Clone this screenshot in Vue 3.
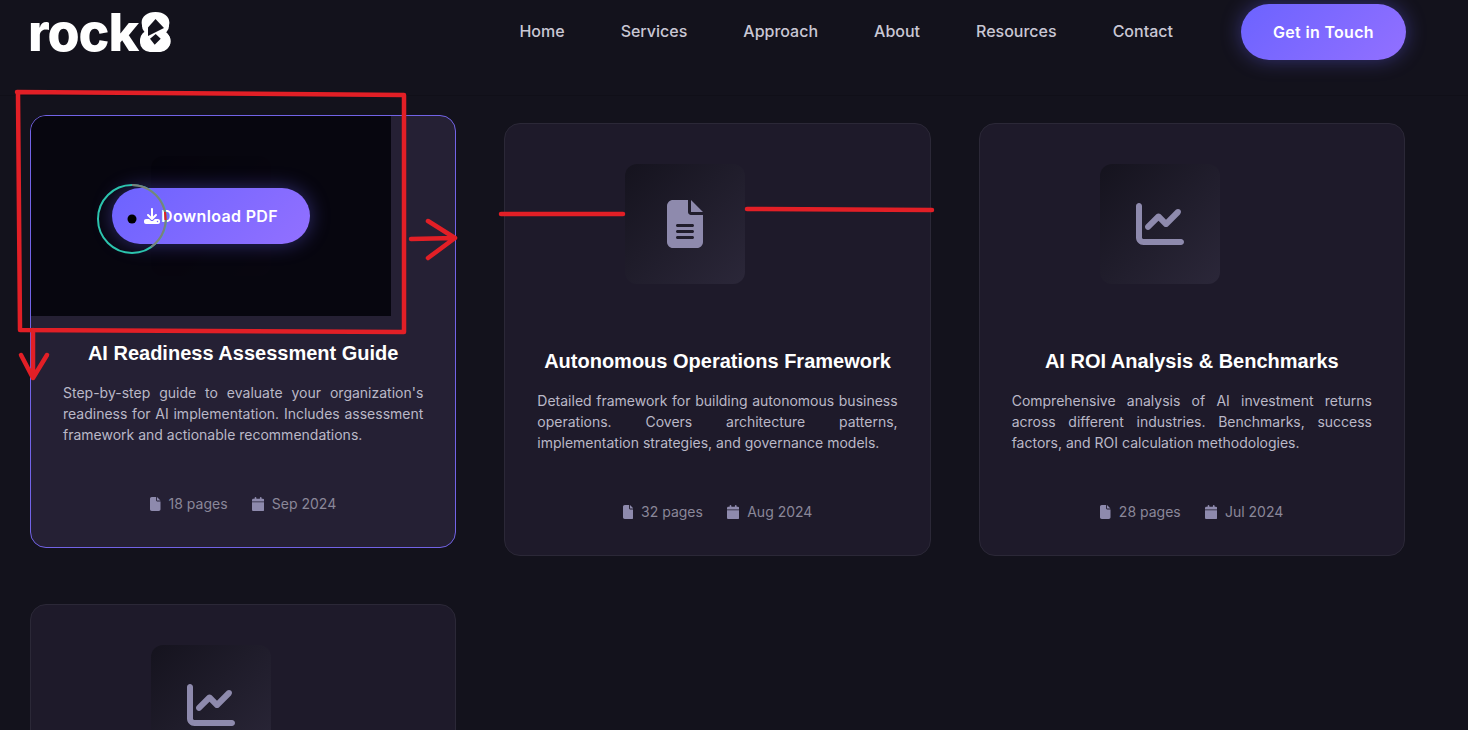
<template>
  <div class="page">
    <header class="topbar">
      <a class="logo">rock<span class="logoEight">8<svg viewBox="0 0 32 40" class="logoCut">
        <rect x="3" y="1" width="27" height="21" rx="9" fill="#fff" />
        <rect x="1" y="17" width="30" height="22" rx="10" fill="#fff" />
        <path d="M16.500 6 L25 15 L9 23 L9 14.500 Z" fill="#14131d" />
        <path d="M16.700 21 L21.700 25.700 L15.700 31.700 L11 25.700 Z" fill="#14131d" />
      </svg></span></a>
      <nav class="menu">
        <a v-for="item in menu" :key="item">{{ item }}</a>
      </nav>
      <button class="pill touch">Get in Touch</button>
    </header>

    <main class="grid">
      <article v-for="card in cards" :key="card.title" class="card" :class="{ hovered: card.hovered }">
        <div class="thumb">
          <div class="iconBox">
            <svg v-if="card.icon === 'file'" class="bigIcon" viewBox="0 0 384 512"><path :d="fileLines" /></svg>
            <svg v-else class="bigIcon" viewBox="0 0 512 512"><path :d="chartLine" /></svg>
          </div>
          <div v-if="card.hovered" class="overlay">
            <button class="pill download">
              <svg class="dlIcon" viewBox="0 0 512 512"><path :d="downloadIcon" /></svg>Download PDF
            </button>
          </div>
        </div>
        <div v-if="card.desc" class="body">
          <h3>{{ card.title }}</h3>
          <p class="desc">{{ card.desc }}</p>
          <div class="meta">
            <span><svg viewBox="0 0 384 512"><path :d="fileSolid" /></svg>{{ card.pages }} pages</span>
            <span><svg viewBox="0 0 448 512"><path :d="calendar" /></svg>{{ card.date }}</span>
          </div>
        </div>
      </article>
    </main>

    <!-- marks drawn over the screenshot by hand -->
    <svg class="marks" viewBox="0 0 1468 730">
      <g fill="none" stroke="#e21f26" stroke-width="4.500" stroke-linecap="round" stroke-linejoin="round">
        <path d="M17 92 L404 95 L404 332 L20 330 L18 94" />
        <path d="M411 239 L455 238 M428 221 L455 238 L428 258" />
        <path d="M33 330 L33 378 M21 355 L33 378 L47 355" />
        <path d="M501 214 L623 214" />
        <path d="M747 209 L932 210" />
      </g>
      <circle cx="132" cy="219" r="34" fill="none" stroke="#2cc4ae" stroke-width="2" />
      <path d="M132 185 A34 34 0 0 1 151 247" fill="none" stroke="#7d7f7a" stroke-width="2" />
      <path d="M165 212 L165.600 220" fill="none" stroke="#e21f26" stroke-width="2" />
      <circle cx="132" cy="219" r="4.500" fill="#000" />
    </svg>
  </div>
</template>

<script setup>
const menu = ["Home", "Services", "Approach", "About", "Resources", "Contact"];

const cards = [
  {
    title: "AI Readiness Assessment Guide",
    desc: "Step-by-step guide to evaluate your organization's readiness for AI implementation. Includes assessment framework and actionable recommendations.",
    pages: 18,
    date: "Sep 2024",
    icon: "file",
    hovered: true,
  },
  {
    title: "Autonomous Operations Framework",
    desc: "Detailed framework for building autonomous business operations. Covers architecture patterns, implementation strategies, and governance models.",
    pages: 32,
    date: "Aug 2024",
    icon: "file",
  },
  {
    title: "AI ROI Analysis & Benchmarks",
    desc: "Comprehensive analysis of AI investment returns across different industries. Benchmarks, success factors, and ROI calculation methodologies.",
    pages: 28,
    date: "Jul 2024",
    icon: "chart",
  },
  { title: "fourth", icon: "chart" },
];

const fileLines = "M64 0C28.7 0 0 28.7 0 64V448c0 35.3 28.7 64 64 64H320c35.3 0 64-28.7 64-64V160H256c-17.7 0-32-14.3-32-32V0H64zM256 0V128H384L256 0zM112 256H272c8.8 0 16 7.2 16 16s-7.2 16-16 16H112c-8.8 0-16-7.2-16-16s7.2-16 16-16zm0 64H272c8.8 0 16 7.2 16 16s-7.2 16-16 16H112c-8.8 0-16-7.2-16-16s7.2-16 16-16zm0 64H272c8.8 0 16 7.2 16 16s-7.2 16-16 16H112c-8.8 0-16-7.2-16-16s7.2-16 16-16z";
const chartLine = "M64 64c0-17.7-14.3-32-32-32S0 46.3 0 64V400c0 44.2 35.8 80 80 80H480c17.7 0 32-14.3 32-32s-14.3-32-32-32H80c-8.8 0-16-7.2-16-16V64zm406.6 86.6c12.5-12.5 12.5-32.8 0-45.3s-32.8-12.5-45.3 0L320 210.7l-57.4-57.4c-12.5-12.5-32.8-12.5-45.3 0l-112 112c-12.5 12.5-12.5 32.8 0 45.3s32.8 12.5 45.3 0L240 221.3l57.4 57.4c12.5 12.5 32.8 12.5 45.3 0l128-128z";
const downloadIcon = "M288 32c0-17.7-14.3-32-32-32s-32 14.3-32 32V274.7l-73.4-73.4c-12.5-12.5-32.8-12.5-45.3 0s-12.5 32.8 0 45.3l128 128c12.5 12.5 32.8 12.5 45.3 0l128-128c12.5-12.5 12.5-32.8 0-45.3s-32.8-12.5-45.3 0L288 274.7V32zM64 352c-35.3 0-64 28.7-64 64v32c0 35.3 28.7 64 64 64H448c35.3 0 64-28.7 64-64V416c0-35.3-28.7-64-64-64H346.5l-45.3 45.3c-25 25-65.5 25-90.5 0L165.5 352H64zm368 56a24 24 0 1 1 0 48 24 24 0 1 1 0-48z";
const fileSolid = "M0 64C0 28.7 28.7 0 64 0H224V128c0 17.7 14.3 32 32 32H384V448c0 35.3-28.7 64-64 64H64c-35.3 0-64-28.7-64-64V64zm384 64H256V0L384 128z";
const calendar = "M96 32V64H48C21.5 64 0 85.5 0 112v48H448V112c0-26.5-21.5-48-48-48H352V32c0-17.7-14.3-32-32-32s-32 14.3-32 32V64H160V32c0-17.7-14.3-32-32-32S96 14.3 96 32zM448 192H0V464c0 26.5 21.5 48 48 48H400c26.5 0 48-21.5 48-48V192z";
</script>

<style>
html, body {
  margin: 0;
  height: 730px;
  overflow: hidden;
  background: #13121c;
}
</style>

<style scoped>
.page {
  position: relative;
  height: 730px;
  overflow: hidden;
  background: #13121c;
  font-family: Inter, "Liberation Sans", sans-serif;
}
.topbar {
  box-sizing: border-box;
  height: 96px;
  padding: 4px 62px 0 28px;
  display: flex;
  align-items: flex-start;
  border-bottom: 1px solid #100f18;
}
.logo {
  margin-top: 1px;
  color: #fff;
  font-weight: 800;
  font-size: 52px;
  line-height: 56px;
  letter-spacing: -1px;
  display: flex;
}
.logoEight {
  position: relative;
  display: block;
}
.logoCut {
  position: absolute;
  left: 1px;
  top: 8px;
  width: 32px;
  height: 40px;
}
.menu {
  margin-left: auto;
  display: flex;
  gap: 56px;
  height: 54px;
  align-items: center;
}
.menu a {
  color: #c9c7d4;
  font-size: 16px;
  font-weight: 500;
}
.pill {
  border: none;
  height: 56px;
  padding: 0 32px;
  border-radius: 28px;
  color: #fff;
  font-family: Inter, sans-serif;
  font-size: 16px;
  font-weight: 600;
  letter-spacing: 0.33px;
  background: linear-gradient(135deg, #6c63ff, #9270ff);
  box-shadow: 0 0 20px rgba(108, 99, 255, 0.4);
}
.touch {
  margin-left: 68px;
}
.grid {
  padding: 27px 63px 0 30px;
  display: grid;
  grid-template-columns: repeat(3, 1fr);
  gap: 48px;
}
.card {
  box-sizing: border-box;
  height: 433px;
  background: #1e1a2a;
  border: 1px solid #2b2837;
  border-radius: 16px;
  overflow: hidden;
}
.hovered {
  transform: translateY(-8px);
  background: #252034;
  border-color: #7263e6;
}
.thumb {
  position: relative;
  width: 360px;
  height: 200px;
  display: flex;
  align-items: center;
  justify-content: center;
}
.iconBox {
  width: 120px;
  height: 120px;
  border-radius: 12px;
  background: linear-gradient(135deg, #15131e, #2b2739);
  display: flex;
  align-items: center;
  justify-content: center;
}
.bigIcon {
  height: 48px;
  fill: #8e8aad;
}
.overlay {
  position: absolute;
  inset: 0;
  background: rgba(3, 2, 10, 0.88);
  display: flex;
  align-items: center;
  justify-content: center;
}
.download {
  display: flex;
  align-items: center;
  gap: 1px;
}
.dlIcon {
  width: 16px;
  height: 16px;
  fill: #fff;
}
.body {
  padding: 24px 32px 32px;
}
h3 {
  margin: 0 0 16px;
  text-align: center;
  color: #fff;
  font-family: "Liberation Sans", sans-serif;
  font-size: 20px;
  line-height: 26px;
  font-weight: 700;
}
.desc {
  margin: 0 0 48px;
  color: #bab8c7;
  font-size: 14px;
  line-height: 21px;
  text-align: justify;
}
.meta {
  display: flex;
  justify-content: center;
  gap: 24px;
  color: #8a8799;
  font-size: 14px;
  line-height: 21px;
}
.meta span {
  display: flex;
  align-items: center;
  gap: 8px;
}
.meta svg {
  height: 14px;
  fill: #8e8aad;
}
.marks {
  position: absolute;
  left: 0;
  top: 0;
  width: 1468px;
  height: 730px;
  pointer-events: none;
}
</style>
